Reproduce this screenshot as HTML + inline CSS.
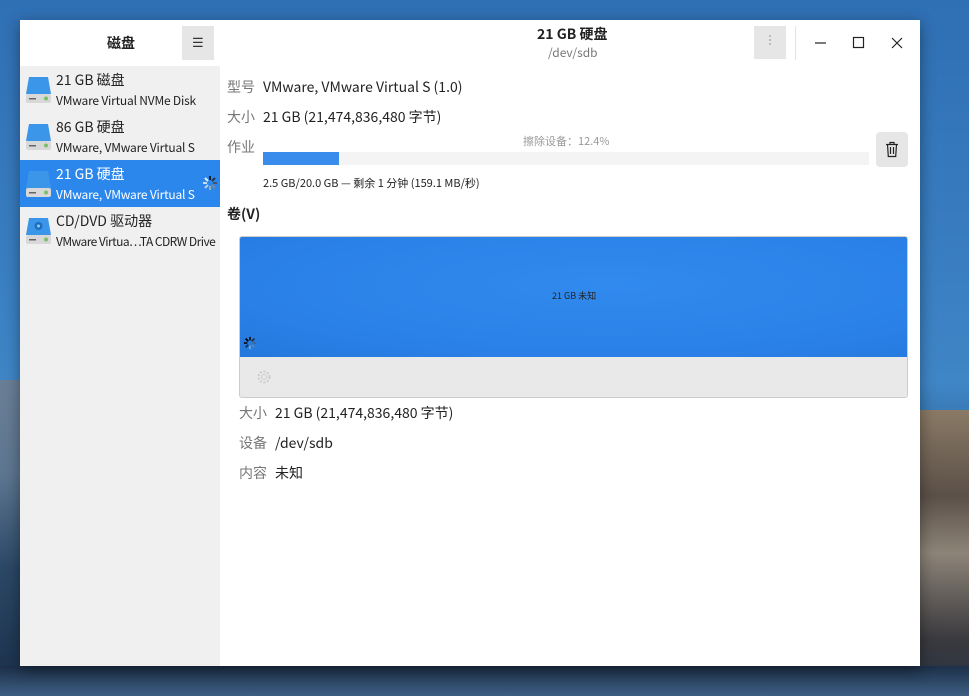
<!DOCTYPE html>
<html><head><meta charset="utf-8"><style>
*{margin:0;padding:0;box-sizing:border-box}
body{width:969px;height:696px;overflow:hidden;position:relative;font-family:"Noto Sans CJK SC","Liberation Sans",sans-serif;line-height:1.2;
background:linear-gradient(180deg,#2f6fb3 0%,#3a7fc2 40%,#3f86c6 55%,#2a5d8e 70%,#1d3d5e 100%);}
.mtnL{position:absolute;left:0;top:380px;width:22px;height:316px;background:linear-gradient(180deg,#6a7f96,#5d7690 30%,#2b4766 60%,#1a2f48)}
.mtnR{position:absolute;left:918px;top:410px;width:51px;height:286px;background:linear-gradient(180deg,#8a7a66,#5b5048 30%,#8d8478 50%,#3b3a3e 80%,#243244)}
.mtnB{position:absolute;left:0;top:666px;width:969px;height:30px;background:linear-gradient(180deg,#1c2f48,#3d5f82)}
.win{position:absolute;left:20px;top:20px;width:900px;height:646px;background:#fff;box-shadow:0 4px 14px rgba(0,0,0,.4)}
.side{position:absolute;left:0;top:0;width:200px;height:646px;background:#f0f0f0}
.shead{position:absolute;left:0;top:0;width:200px;height:46px;background:#fff}
.t{position:absolute;white-space:nowrap}
.item{position:absolute;left:0;width:200px;height:47px}
.item .n{position:absolute;left:36px;top:6px;font-size:14px;color:#222;white-space:nowrap}
.item .s{position:absolute;left:36px;top:28px;font-size:12px;color:#222;white-space:nowrap;letter-spacing:-0.2px}
.sel{background:#2c87ed}.sel .n,.sel .s{color:#fff}
.ic{position:absolute;left:5px;top:8px;width:27px;height:32px}
.lab{font-size:14px;color:#777}.val{font-size:14px;color:#222}
</style></head><body>
<div class="mtnL"></div><div class="mtnR"></div><div class="mtnB"></div>
<div class="win">
 <div class="side">
  <div class="shead">
   <div class="t" style="left:87px;top:15px;font-size:14px;font-weight:bold;color:#222">磁盘</div>
   <div style="position:absolute;left:162px;top:6px;width:32px;height:34px;background:#e6e6e6"></div>
   <div class="t" style="left:172px;top:14px;font-size:13px;color:#333">☰</div>
  </div>
  <div class="item" style="top:46px"><svg class="ic" viewBox="0 0 27 32"><path d="M4 3h19l3 17H1z" fill="#3b95e8"/><rect x="1" y="20" width="25" height="9" rx="2" fill="#d8d8d8"/><rect x="4" y="24" width="7" height="1.5" fill="#666"/><circle cx="21" cy="24.5" r="2" fill="#7bbf6a"/></svg><div class="n">21 GB 磁盘</div><div class="s">VMware Virtual NVMe Disk</div></div>
  <div class="item" style="top:93px"><svg class="ic" viewBox="0 0 27 32"><path d="M4 3h19l3 17H1z" fill="#3b95e8"/><rect x="1" y="20" width="25" height="9" rx="2" fill="#d8d8d8"/><rect x="4" y="24" width="7" height="1.5" fill="#666"/><circle cx="21" cy="24.5" r="2" fill="#7bbf6a"/></svg><div class="n">86 GB 硬盘</div><div class="s">VMware, VMware Virtual S</div></div>
  <div class="item sel" style="top:140px"><svg class="ic" viewBox="0 0 27 32"><path d="M4 3h19l3 17H1z" fill="#3b95e8"/><rect x="1" y="20" width="25" height="9" rx="2" fill="#d8d8d8"/><rect x="4" y="24" width="7" height="1.5" fill="#666"/><circle cx="21" cy="24.5" r="2" fill="#7bbf6a"/></svg><div class="n">21 GB 硬盘</div><div class="s">VMware, VMware Virtual S</div>
   <svg style="position:absolute;left:182px;top:15px" width="16" height="16" viewBox="0 0 16 16"><g stroke-width="2"><path d="M8 1v4" stroke="#123"/><path d="M13 3l-3 3" stroke="#234"/><path d="M15 8h-4" stroke="#456"/><path d="M13 13l-3-3" stroke="#789"/><path d="M8 15v-4" stroke="#9ab"/><path d="M3 13l3-3" stroke="#bcd"/><path d="M1 8h4" stroke="#cde"/><path d="M3 3l3 3" stroke="#def"/></g></svg></div>
  <div class="item" style="top:187px"><svg class="ic" viewBox="0 0 27 32"><path d="M4 3h19l3 17H1z" fill="#3b95e8"/><circle cx="13.5" cy="11" r="4" fill="#1d6fc4"/><circle cx="13.5" cy="11" r="1.5" fill="#9cd"/><rect x="1" y="20" width="25" height="9" rx="2" fill="#d8d8d8"/><rect x="4" y="24" width="7" height="1.5" fill="#666"/><circle cx="21" cy="24.5" r="2" fill="#7bbf6a"/></svg><div class="n">CD/DVD 驱动器</div><div class="s" style="letter-spacing:-0.55px">VMware Virtua⋯TA CDRW Drive</div></div>
 </div>
 <div class="t" style="left:517px;top:6px;font-size:14px;font-weight:bold;color:#222">21 GB 硬盘</div>
 <div class="t" style="left:528px;top:26px;font-size:12px;color:#777">/dev/sdb</div>
 <div style="position:absolute;left:734px;top:6px;width:32px;height:33px;background:#e6e6e6"></div>
 <div style="position:absolute;left:749px;top:15px;width:2px;height:2px;background:#bbb;box-shadow:0 4px #bbb,0 8px #bbb"></div>
 <div style="position:absolute;left:775px;top:6px;width:1px;height:34px;background:#e4e4e4"></div>
 <svg style="position:absolute;left:790px;top:14px" width="100" height="18" viewBox="0 0 100 18"><g stroke="#222" stroke-width="1.2" fill="none"><path d="M5 9h11"/><rect x="43.5" y="3.5" width="10" height="10"/><path d="M82 4l10 10M92 4l-10 10"/></g></svg>

 <div class="t lab" style="left:207px;top:59px">型号</div><div class="t val" style="left:243px;top:59px">VMware, VMware Virtual S (1.0)</div>
 <div class="t lab" style="left:207px;top:89px">大小</div><div class="t val" style="left:243px;top:89px">21 GB (21,474,836,480 字节)</div>
 <div class="t lab" style="left:207px;top:119px">作业</div>
 <div class="t" style="left:503px;top:115px;font-size:11px;color:#999">擦除设备：12.4%</div>
 <div style="position:absolute;left:243px;top:132px;width:606px;height:13px;background:#f4f4f4"></div>
 <div style="position:absolute;left:243px;top:132px;width:76px;height:13px;background:#3a8cec"></div>
 <div class="t" style="left:243px;top:157px;font-size:11px;color:#222">2.5 GB/20.0 GB — 剩余 1 分钟 (159.1 MB/秒)</div>
 <div style="position:absolute;left:856px;top:112px;width:32px;height:35px;background:#e6e6e6;border-radius:4px"></div>
 <svg style="position:absolute;left:864px;top:121px" width="16" height="17" viewBox="0 0 16 17"><g stroke="#222" stroke-width="1.2" fill="none"><path d="M2 3.5h12M6 3.5V1.5h4v2M3.5 3.5l.8 12h7.4l.8-12M6.5 6v7M9.5 6v7"/></g></svg>
 <div class="t" style="left:207px;top:186px;font-size:14px;font-weight:bold;color:#222">卷(V)</div>
 <div style="position:absolute;left:219px;top:216px;width:669px;height:162px;border:1px solid #ccc;border-radius:3px;background:#e9e9e9;overflow:hidden">
  <div style="position:absolute;left:0;top:0;width:669px;height:120px;background:radial-gradient(ellipse at 55% 40%,#318aee,#2a80e6 70%,#2478dd)"></div>
  <div class="t" style="left:312px;top:54px;font-size:9px;color:#222">21 GB 未知</div>
  <svg style="position:absolute;left:3px;top:99px" width="14" height="14" viewBox="0 0 16 16"><g stroke-width="2"><path d="M8 1v4" stroke="#111"/><path d="M13 3l-3 3" stroke="#234"/><path d="M15 8h-4" stroke="#468"/><path d="M13 13l-3-3" stroke="#58a"/><path d="M8 15v-4" stroke="#6ad"/><path d="M3 13l3-3" stroke="#135"/><path d="M1 8h4" stroke="#111"/><path d="M3 3l3 3" stroke="#000"/></g></svg>
  <svg style="position:absolute;left:16px;top:132px" width="16" height="16" viewBox="0 0 16 16"><circle cx="8" cy="8" r="5.5" fill="none" stroke="#ccc" stroke-width="2" stroke-dasharray="2 1.6"/><circle cx="8" cy="8" r="2.5" fill="none" stroke="#ccc"/></svg>
 </div>
 <div class="t lab" style="left:219px;top:385px">大小</div><div class="t val" style="left:255px;top:385px">21 GB (21,474,836,480 字节)</div>
 <div class="t lab" style="left:219px;top:415px">设备</div><div class="t val" style="left:255px;top:415px">/dev/sdb</div>
 <div class="t lab" style="left:219px;top:445px">内容</div><div class="t val" style="left:255px;top:445px">未知</div>
</div>
</body></html>
